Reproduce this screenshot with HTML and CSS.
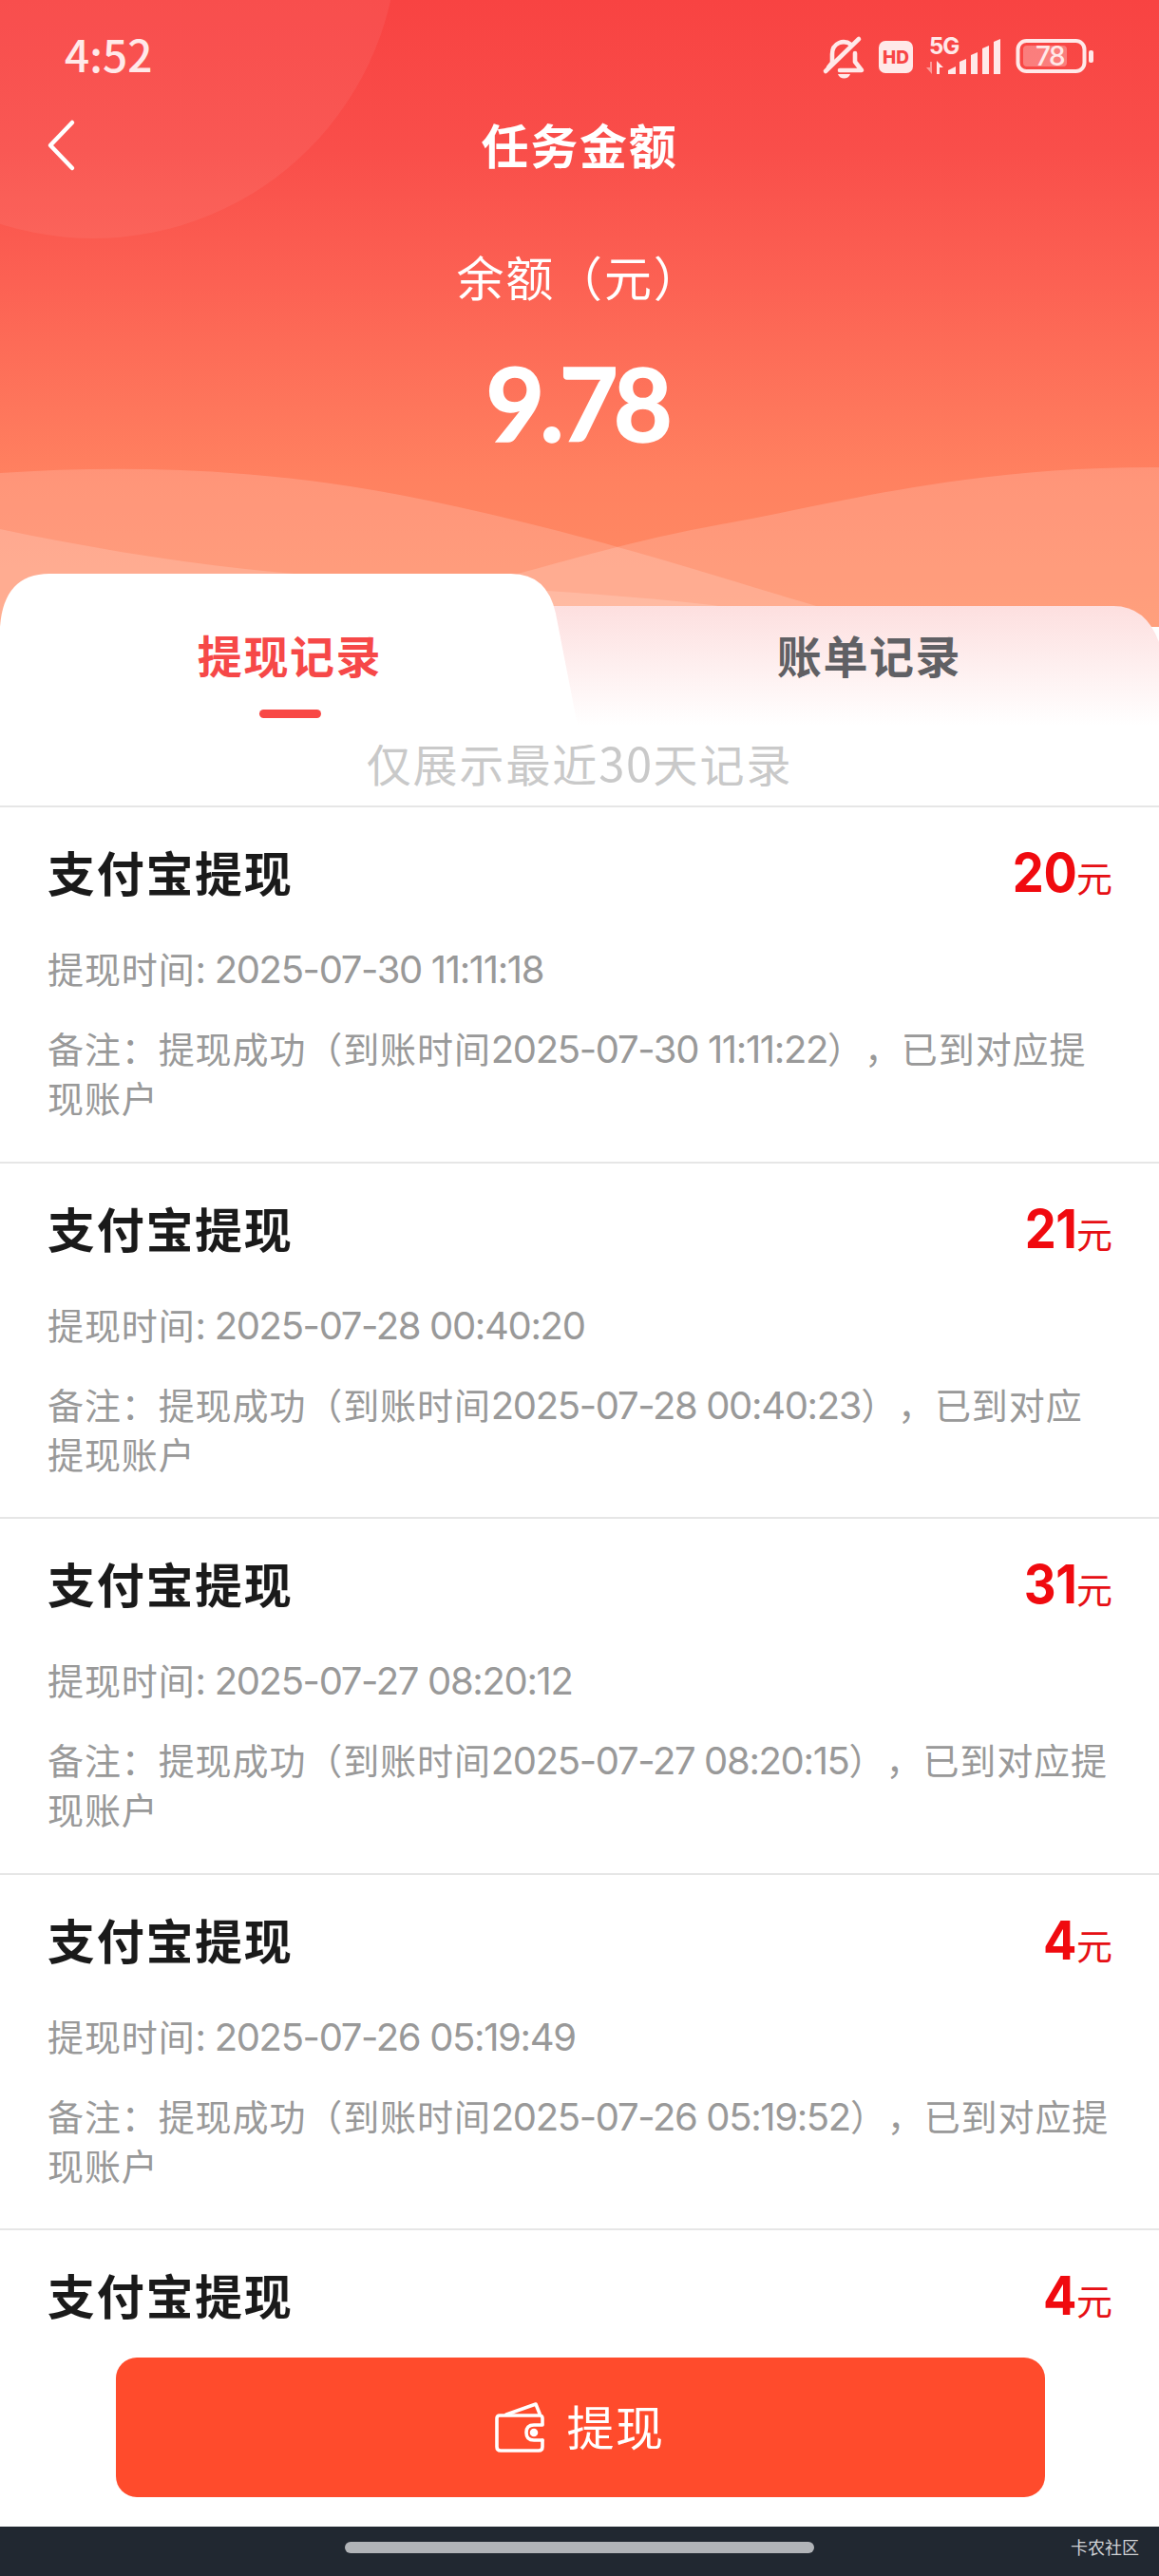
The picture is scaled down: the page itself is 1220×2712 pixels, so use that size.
FILE: index.html
```html
<!DOCTYPE html>
<html lang="zh-CN">
<head>
  <meta charset="UTF-8" />
  <meta name="viewport" content="width=device-width, initial-scale=1.0">
  <title>任务金额</title>
  <link rel="stylesheet" href="styles.css">
</head>
<body>

  <div class="page">
    <div class="header">
      <!-- circle and waves behind the balance -->
      <svg class="header-bg" viewBox="0 0 1220 660" width="1220" height="660">
        <circle cx="98" cy="-70" r="321" fill="#fff" fill-opacity=".06" />
        <path d="M0 498C150 488 300 495 451 527S700 590 856 637L930 660H0Z" fill="#fff" fill-opacity=".16" />
        <path d="M1220 492C1020 491 880 530 770 550S600 590 545 604L440 660H1220Z" fill="#fff" fill-opacity=".16" />
        <path d="M0 557C100 578 210 596 310 604C440 616 600 620 750 637L900 660H0Z" fill="#fff" fill-opacity=".16" />
      </svg>

      <div class="status-bar">
        <div class="time">4:52</div>
        <svg class="status-icons" viewBox="0 0 290 50" width="290" height="50">
          <g fill="none" stroke="#ffe9e9" stroke-width="4.600" stroke-linecap="round" stroke-linejoin="round">
            <path d="M13 33L17 28V19C17 7 29 3 37 9" />
            <path d="M41 18V27L48 36H25" />
            <path d="M10 37L45 3" />
          </g>
          <path d="M23 40H36C34 46 25 46 23 40Z" fill="#ffe9e9" />
          <rect x="66" y="5" width="36" height="34" rx="7" fill="#ffe9e9" />
          <text class="hd" x="84" y="29" text-anchor="middle">HD</text>
          <text class="net" x="119" y="19">5G</text>
          <g fill="#ffe9e9">
            <path d="M122 27V40L116 33H120V27Z" opacity=".5" />
            <path d="M127 40V26L134 33H130V40Z" />
            <path d="M139 36L147 32V40H139Z" />
            <path d="M151 27L158 24V40H151Z" />
            <path d="M163 20L170 17V40H163Z" />
            <path d="M175 13L182 10V40H175Z" />
            <path d="M187 6L194 3V40H187Z" />
          </g>
          <rect x="212.500" y="5" width="70" height="32" rx="9" fill="none" stroke="#ffe9e9" stroke-width="4" />
          <rect x="218" y="10" width="46" height="22" rx="4" fill="#fff" fill-opacity=".3" />
          <rect x="287" y="15" width="5" height="13" rx="2" fill="#ffe9e9" />
          <text class="battery" x="246" y="31" text-anchor="middle">78</text>
        </svg>
      </div>

      <div class="nav">
        <svg class="back" viewBox="0 0 40 64" width="40" height="64">
          <path d="M32 8L9 32L32 56" fill="none" stroke="#fff" stroke-width="4.500" stroke-linecap="round" stroke-linejoin="round" />
        </svg>
        <h1>任务金额</h1>
      </div>

      <div class="balance-label">余额（元）</div>
      <div class="balance">9.78</div>
    </div>

    <div class="tabs">
      <svg class="tabs-bg" viewBox="0 0 1220 180" width="1220" height="180">
        <defs>
          <linearGradient id="pink" x1="0" y1="0" x2="0" y2="1">
            <stop offset="0" stop-color="#fddfdf" />
            <stop offset="1" stop-color="#fff" />
          </linearGradient>
        </defs>
        <path d="M0 56H1220V180H0Z" fill="#fff" />
        <path d="M540 34H1172Q1206 34 1220 72V160H540Z" fill="url(#pink)" />
        <path d="M0 56Q4 0 52 0H538Q576 0 585 42L608 160V180H0Z" fill="#fff" />
      </svg>
      <div class="tab active">提现记录</div>
      <div class="tab">账单记录</div>
    </div>

    <div class="hint">仅展示最近<span>30</span>天记录</div>

    <div class="list">
      <div class="item">
        <div class="item-head">
          <div class="name">支付宝提现</div>
          <div class="amount"><b>20</b>元</div>
        </div>
        <div class="date">提现时间<span class="num">: 2025-07-30 11:11:18</span></div>
        <div class="remark">备注：提现成功（到账时间<span class="num">2025-07-30 11:11:22</span>），已到对应提<br>现账户</div>
      </div>
      <div class="item">
        <div class="item-head">
          <div class="name">支付宝提现</div>
          <div class="amount"><b>21</b>元</div>
        </div>
        <div class="date">提现时间<span class="num">: 2025-07-28 00:40:20</span></div>
        <div class="remark">备注：提现成功（到账时间<span class="num">2025-07-28 00:40:23</span>），已到对应<br>提现账户</div>
      </div>
      <div class="item">
        <div class="item-head">
          <div class="name">支付宝提现</div>
          <div class="amount"><b>31</b>元</div>
        </div>
        <div class="date">提现时间<span class="num">: 2025-07-27 08:20:12</span></div>
        <div class="remark">备注：提现成功（到账时间<span class="num">2025-07-27 08:20:15</span>），已到对应提<br>现账户</div>
      </div>
      <div class="item">
        <div class="item-head">
          <div class="name">支付宝提现</div>
          <div class="amount"><b>4</b>元</div>
        </div>
        <div class="date">提现时间<span class="num">: 2025-07-26 05:19:49</span></div>
        <div class="remark">备注：提现成功（到账时间<span class="num">2025-07-26 05:19:52</span>），已到对应提<br>现账户</div>
      </div>
      <div class="item last">
        <div class="item-head">
          <div class="name">支付宝提现</div>
          <div class="amount"><b>4</b>元</div>
        </div>
      </div>
    </div>

    <div class="footer">
      <button class="withdraw">
        <svg viewBox="0 0 56 56" width="56" height="56" fill="none" stroke="#fff" stroke-width="3.600" stroke-linejoin="round" stroke-linecap="round">
          <path d="M52 24V18Q52 15 49 15H7Q4 15 4 18V48Q4 52 8 52H48Q52 52 52 48V41" />
          <path d="M52 25H43Q35 25 35 33T43 41H52" />
          <path d="M14 14L45 3L49 13" />
          <circle cx="43" cy="33" r="2.500" fill="#fff" />
        </svg>
        <span>提现</span>
      </button>
    </div>

    <div class="home-bar">
      <div class="pill"></div>
      <span class="mark">卡农社区</span>
    </div>
  </div>

</body>
</html>
```
FILE: styles.css
```css
* {
  margin: 0;
  padding: 0;
  box-sizing: border-box;
}

body {
  width: 1220px;
  font-family: "Noto Sans CJK SC", sans-serif;
  background: #fff;
  color: #1a1a1a;
  text-spacing-trim: space-all;
}

.page {
  display: flex;
  flex-direction: column;
  height: 2712px;
  overflow: hidden;
}

/* header */
.header {
  position: relative;
  height: 660px;
  flex-shrink: 0;
  background: linear-gradient(#f84342, #f94e4a 24%, #fc6153 45%, #ff8160 76%, #ff8e65);
  color: #fff;
}

.header-bg {
  position: absolute;
  left: 0;
  top: 0;
}

.status-bar {
  position: relative;
  display: flex;
  justify-content: space-between;
  align-items: center;
  height: 115px;
  padding: 0 71px 0 68px;
}

.time {
  margin-top: -4px;
  font-size: 46px;
  font-weight: 500;
  color: #ffe9e9;
  line-height: 60px;
}

.status-icons {
  margin-top: 11px;
  overflow: visible;
}

.status-icons text {
  font-family: Inter, sans-serif;
  fill: #ffe9e9;
}

.status-icons .hd {
  font-size: 19px;
  font-weight: 800;
  fill: #f84545;
}

.status-icons .net {
  font-size: 24px;
  font-weight: 700;
  letter-spacing: -1px;
}

.status-icons .battery {
  font-size: 28px;
  font-weight: 500;
  letter-spacing: -1.5px;
}

.nav {
  position: relative;
  display: flex;
  align-items: center;
  justify-content: center;
  height: 72px;
}

.back {
  position: absolute;
  left: 44px;
  top: 6px;
}

h1 {
  font-size: 50px;
  font-weight: 700;
  letter-spacing: 1.7px;
  line-height: 72px;
}

.balance-label {
  position: relative;
  margin-top: 67px;
  text-align: center;
  font-size: 50px;
  letter-spacing: 1.8px;
  line-height: 72px;
}

.balance {
  position: relative;
  margin-top: 33px;
  padding-right: 6px;
  text-align: center;
  font-family: Lato, sans-serif;
  font-size: 107px;
  font-weight: 700;
  letter-spacing: -5px;
  line-height: 130px;
  -webkit-text-stroke: 1.5px #fff;
}

/* tabs */
.tabs {
  position: relative;
  display: flex;
  flex-shrink: 0;
  height: 170px;
  margin-top: -56px;
}

.tabs-bg {
  position: absolute;
  left: 0;
  top: 0;
}

.tab {
  position: relative;
  width: 610px;
  padding-top: 50px;
  text-align: center;
  font-size: 47px;
  font-weight: 700;
  letter-spacing: 1.6px;
  line-height: 70px;
  color: #606064;
}

.tab.active {
  color: #f64848;
}

.tab.active::after {
  content: "";
  display: block;
  width: 65px;
  height: 9px;
  margin: 23px auto 0;
  border-radius: 5px;
  background: #f84845;
}

.hint {
  flex-shrink: 0;
  height: 74px;
  text-align: center;
  font-size: 47px;
  letter-spacing: 1.9px;
  line-height: 58px;
  color: #c9c9c9;
}

.hint span {
  font-size: 49px;
  letter-spacing: 1.5px;
  line-height: 1;
}

/* records */
.list {
  flex: 1;
  overflow: hidden;
}

.item {
  height: 374.6px;
  padding: 31px 49px 0 50px;
  border-top: 2px solid #e6e6e6;
}

.item.last {
  height: auto;
}

.item-head {
  display: flex;
  justify-content: space-between;
  height: 72px;
}

.name {
  font-size: 50px;
  font-weight: 700;
  letter-spacing: 1.7px;
  line-height: 72px;
}

.amount {
  display: flex;
  align-items: baseline;
  font-size: 38px;
  line-height: 72px;
  color: #e60f14;
}

.amount b {
  margin-top: 2px;
  font-family: Inter, sans-serif;
  font-size: 57px;
  letter-spacing: -.5px;
  transform: scaleX(.92);
  transform-origin: right;
  color: #f00a0f;
}

.date, .remark {
  font-size: 38px;
  letter-spacing: .9px;
  line-height: 52px;
  color: #999;
  white-space: nowrap;
}

.date {
  margin-top: 40px;
}

.remark {
  margin-top: 32px;
}

.num {
  font-family: Inter, sans-serif;
  font-size: 40px;
  letter-spacing: -1.35px;
  line-height: 1;
}

/* bottom */
.footer {
  flex-shrink: 0;
  height: 200px;
  padding: 22px 120px 0 122px;
}

.withdraw {
  display: flex;
  align-items: center;
  justify-content: center;
  gap: 22px;
  width: 978px;
  height: 147px;
  padding-right: 4px;
  border: none;
  border-radius: 22px;
  background: #ff4b2c;
  color: #fff;
  font-family: inherit;
  font-size: 50px;
  letter-spacing: 1.5px;
}

.withdraw span {
  margin-top: -6px;
}

.home-bar {
  position: relative;
  flex-shrink: 0;
  height: 52px;
  padding-top: 16px;
  background: #212831;
}

.pill {
  width: 494px;
  height: 12px;
  margin: 0 auto;
  border-radius: 6px;
  background: #b1b4b8;
}

.mark {
  position: absolute;
  right: 21px;
  top: 8px;
  font-size: 18px;
  line-height: 26px;
  color: #d0d2d5;
}
```
